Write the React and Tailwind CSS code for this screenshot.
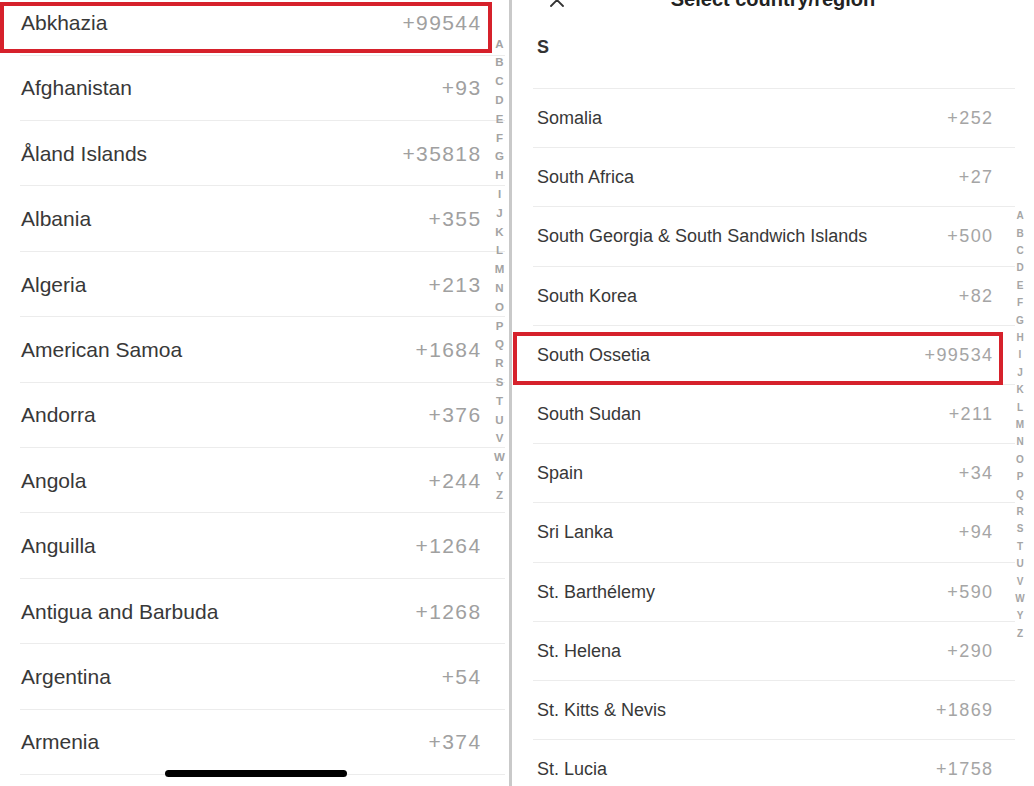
import React from "react";

const LEFT = [
  ["Abkhazia", "+99544"],
  ["Afghanistan", "+93"],
  ["Åland Islands", "+35818"],
  ["Albania", "+355"],
  ["Algeria", "+213"],
  ["American Samoa", "+1684"],
  ["Andorra", "+376"],
  ["Angola", "+244"],
  ["Anguilla", "+1264"],
  ["Antigua and Barbuda", "+1268"],
  ["Argentina", "+54"],
  ["Armenia", "+374"],
];

const RIGHT = [
  ["Somalia", "+252"],
  ["South Africa", "+27"],
  ["South Georgia & South Sandwich Islands", "+500"],
  ["South Korea", "+82"],
  ["South Ossetia", "+99534"],
  ["South Sudan", "+211"],
  ["Spain", "+34"],
  ["Sri Lanka", "+94"],
  ["St. Barthélemy", "+590"],
  ["St. Helena", "+290"],
  ["St. Kitts & Nevis", "+1869"],
  ["St. Lucia", "+1758"],
];

const LETTERS = "ABCDEFGHIJKLMNOPQRSTUVWYZ".split("");

const font = { fontFamily: '"Liberation Sans", Arial, sans-serif' };

export default function App() {
  return (
    <div
      className="flex w-[1034px] h-[786px] overflow-hidden bg-white"
      style={font}
    >
      {/* Left panel */}
      <div className="relative w-[509px] h-full shrink-0 overflow-hidden bg-white">
        <div className="mt-[-9.7px] ml-[20px] mr-[4px]">
          {LEFT.map(([name, code]) => (
            <div
              key={name}
              className="flex h-[65.4px] items-center justify-between border-b border-[#ececec] pl-[1px] pr-[23.5px]"
            >
              <span className="text-[21px] leading-none text-[#383838]">{name}</span>
              <span className="text-[21px] leading-none tracking-[1.4px] text-[#a0a0a0]">
                {code}
              </span>
            </div>
          ))}
        </div>

        {/* alphabet index */}
        <div className="absolute left-[491px] top-[34.6px] flex w-[17px] flex-col items-center">
          {LETTERS.map((l) => (
            <span
              key={l}
              className="h-[18.8px] text-[11.5px] font-semibold leading-[18.8px] text-[#a3a3a3]"
            >
              {l}
            </span>
          ))}
        </div>

        {/* highlight box */}
        <div className="absolute left-0 top-[2px] h-[51px] w-[492px] border-[4px] border-[#d6212b]" />

        {/* home indicator */}
        <div className="absolute left-[165px] top-[770px] h-[7px] w-[182px] rounded-full bg-black" />
      </div>

      {/* divider */}
      <div className="w-[3px] h-full shrink-0 bg-[#c9c9c9]" />

      {/* Right panel */}
      <div className="relative h-full flex-1 overflow-hidden bg-white">
        {/* header */}
        <div className="relative mt-[-11px] flex h-[20px] items-center justify-center">
          <svg
            className="absolute left-[37px] top-[3px]"
            width="16"
            height="16"
            viewBox="0 0 16 16"
            fill="none"
            stroke="#333"
            strokeWidth="1.8"
            strokeLinecap="round"
          >
            <path d="M2 2 L14 14 M14 2 L2 14" />
          </svg>
          <span className="text-[20px] font-bold leading-[20px] text-[#222222]">
            Select country/region
          </span>
        </div>

        <div className="h-[79px] pl-[25px] pt-[27px]">
          <span className="text-[18px] font-bold leading-[20px] text-[#333333]">S</span>
        </div>

        <div className="ml-[21px] mr-[19px] border-t border-[#ececec]">
          {RIGHT.map(([name, code]) => (
            <div
              key={name}
              className="flex h-[59.2px] items-center justify-between border-b border-[#ececec] pl-[4px] pr-[21.5px]"
            >
              <span className="text-[18px] leading-none text-[#383838]">{name}</span>
              <span className="text-[18px] leading-none tracking-[1.4px] text-[#a5a5a5]">
                {code}
              </span>
            </div>
          ))}
        </div>

        {/* alphabet index */}
        <div className="absolute left-[500px] top-[207.3px] flex w-[16px] flex-col items-center">
          {LETTERS.map((l) => (
            <span
              key={l}
              className="h-[17.4px] text-[10px] font-semibold leading-[17.4px] text-[#a5a5a5]"
            >
              {l}
            </span>
          ))}
        </div>

        {/* highlight box */}
        <div className="absolute left-[1px] top-[332px] h-[53px] w-[490px] border-[4px] border-[#d6212b]" />
      </div>
    </div>
  );
}
